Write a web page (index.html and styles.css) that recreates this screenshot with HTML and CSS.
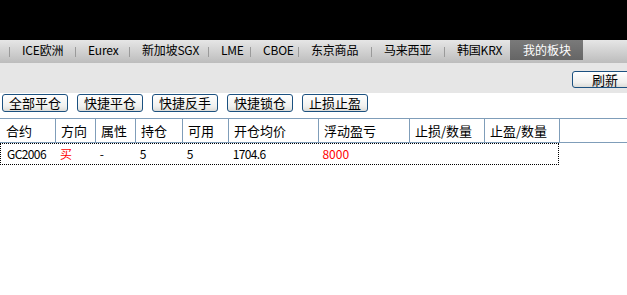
FILE: index.html
```html
<!DOCTYPE html>
<html>
<head>
<meta charset="utf-8">
<link rel="stylesheet" href="styles.css">
</head>
<body>
<div class="topbar"></div>
<div class="tabbar">
  <span class="sep"></span><span class="tab w41">ICE欧洲</span>
  <span class="sep"></span><span class="tab w29">Eurex</span>
  <span class="sep"></span><span class="tab w54">新加坡SGX</span>
  <span class="sep"></span><span class="tab w17">LME</span>
  <span class="sep"></span><span class="tab w23">CBOE</span>
  <span class="sep"></span><span class="tab w48">东京商品</span>
  <span class="sep"></span><span class="tab w48">马来西亚</span>
  <span class="sep"></span><span class="tab w42">韩国KRX</span>
  <span class="tab active">我的板块</span>
</div>
<div class="toolbar">
  <button class="btn refresh">刷新</button>
</div>
<div class="actions">
  <button class="btn">全部平仓</button>
  <button class="btn">快捷平仓</button>
  <button class="btn">快捷反手</button>
  <button class="btn">快捷锁仓</button>
  <button class="btn">止损止盈</button>
</div>
<div class="grid">
  <div class="head">
    <div class="c c1">合约</div>
    <div class="c c2 bl">方向</div>
    <div class="c c3 bl">属性</div>
    <div class="c c4 bl">持仓</div>
    <div class="c c5 bl">可用</div>
    <div class="c c6 bl">开仓均价</div>
    <div class="c c7 bl">浮动盈亏</div>
    <div class="c c8 bl">止损/数量</div>
    <div class="c c9 bl">止盈/数量</div>
    <div class="c c10 bl"></div>
  </div>
  <div class="row">
    <div class="c c1 num">GC2006</div>
    <div class="c c2 red">买</div>
    <div class="c c3">-</div>
    <div class="c c4">5</div>
    <div class="c c5">5</div>
    <div class="c c6 num">1704.6</div>
    <div class="c c7 red">8000</div>
    <div class="c c8"></div>
    <div class="c c9"></div>
  </div>
</div>
</body>
</html>
```
FILE: styles.css
```css
html, body {
  margin: 0;
  padding: 0;
  background: #ffffff;
  overflow: hidden;
}
body {
  width: 627px;
  height: 295px;
  font-family: "Noto Sans CJK SC", "Liberation Sans", sans-serif;
  font-size: 12px;
  color: #000;
}
.topbar {
  height: 40px;
  background: #000;
}
.tabbar {
  height: 23px;
  background: linear-gradient(#e6e6e6, #bcbcbc);
  display: flex;
  align-items: flex-start;
  padding-left: 9px;
}
.sep {
  flex: none;
  width: 1px;
  height: 10px;
  background: #9a9a9a;
  margin-top: 7px;
}
.tab {
  flex: none;
  height: 20px;
  line-height: 20px;
  padding: 0 12px;
  white-space: nowrap;
  font-size: 12px;
  letter-spacing: -0.2px;
  overflow: visible;
}
.w17 { width: 17px; }
.w23 { width: 23px; }
.w29 { width: 29px; }
.w41 { width: 41px; }
.w42 { width: 42px; }
.w48 { width: 48px; }
.w54 { width: 54px; }
.tab.active {
  width: 73px;
  box-sizing: border-box;
  margin-left: -1px;
  background: linear-gradient(#7a7a7a, #656565);
  color: #fff;
  padding: 0 0 0 13px;
  letter-spacing: 0;
}
.toolbar {
  height: 30px;
  background: #e6e6e6;
  display: flex;
  justify-content: flex-end;
  align-items: flex-start;
}
.btn {
  font-family: "Noto Sans CJK SC", "Liberation Sans", sans-serif;
  font-size: 13px;
  line-height: 14px;
  height: 18px;
  width: 66px;
  padding: 0;
  margin: 0;
  border: 1px solid #1c5180;
  border-radius: 3px;
  background: linear-gradient(#ffffff, #f0f0ee 70%, #dcdcd8);
  color: #000;
}
.refresh {
  margin-top: 8px;
  margin-right: -11px;
  height: 17px;
}
.actions {
  display: flex;
  gap: 9px;
  padding: 1px 0 0 2px;
  height: 24px;
}
.grid {
  width: 627px;
}
.head {
  display: flex;
  height: 23px;
  border-top: 1px solid #7f9db9;
  border-bottom: 1px solid #7f9db9;
}
.c {
  box-sizing: border-box;
  padding-left: 5px;
  white-space: nowrap;
  line-height: 23px;
}
.head .c {
  font-size: 13px;
}
.bl {
  border-left: 1px solid #7f9db9;
}
.c1 { width: 55px; padding-left: 6px; }
.c2 { width: 40px; }
.c3 { width: 40px; }
.c4 { width: 47px; }
.c5 { width: 46px; }
.c6 { width: 90px; }
.c7 { width: 91px; }
.c8 { width: 75px; }
.c9 { width: 75px; }
.c10 { flex: 1; }
.row {
  display: flex;
  width: 559px;
  height: 22px;
  box-sizing: border-box;
  border: 1px dotted #000;
}
.row .c {
  line-height: 20px;
}
.row .c1 { width: 54px; }
.num { letter-spacing: -0.6px; }
.red { color: #ff0000; }
```
